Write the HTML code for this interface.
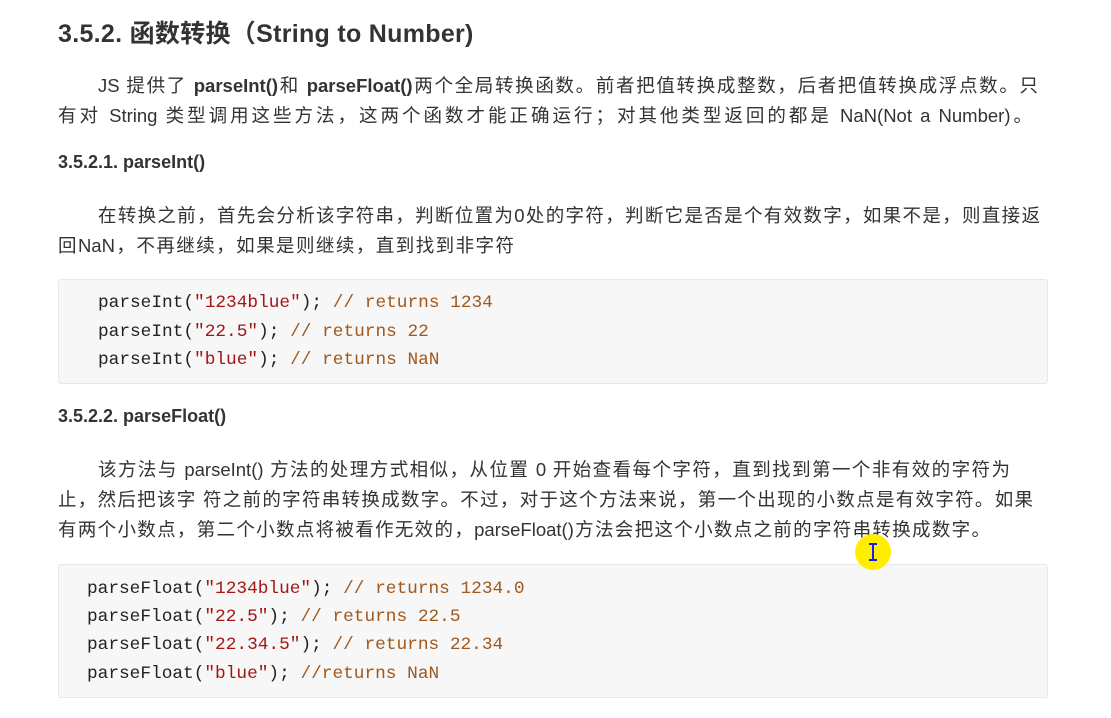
<!DOCTYPE html>
<html><head><meta charset="utf-8"><style>
body{margin:0;width:1111px;height:718px;background:#fff;position:relative;overflow:hidden;font-family:"Liberation Sans","Noto Sans CJK SC",sans-serif;color:#333}
.a{position:absolute;white-space:nowrap}
h1{position:absolute;left:58px;top:14px;margin:0;font-size:25px;letter-spacing:0.3px;font-weight:bold;color:#333}
h3{position:absolute;left:58px;margin:0;font-size:18px;font-weight:bold;color:#333}
.p{position:absolute;left:58px;font-size:18.5px;white-space:nowrap;color:#333;text-align:justify;text-align-last:justify;text-justify:inter-character}
.code{position:absolute;left:58px;width:988px;background:#f7f7f7;border:1px solid #e8e8e8;border-radius:3px}
.c{position:absolute;font-family:"Liberation Mono",monospace;font-size:17.8px;white-space:pre;color:#222}
.s{color:#a31515}.m{color:#a0581c}
</style></head><body>
<h1>3.5.2. 函数转换（String to Number)</h1>
<div class="p" style="top:72px;left:98px;width:940px">JS 提供了 <b>parseInt()</b>和 <b>parseFloat()</b>两个全局转换函数。前者把值转换成整数，后者把值转换成浮点数。只</div>
<div class="p" style="top:102px;width:974px">有对 String 类型调用这些方法，这两个函数才能正确运行；对其他类型返回的都是 NaN(Not a Number)。</div>
<h3 style="top:152px">3.5.2.1. parseInt()</h3>
<div class="p" style="top:202px;left:98px;width:942px">在转换之前，首先会分析该字符串，判断位置为0处的字符，判断它是否是个有效数字，如果不是，则直接返</div>
<div class="p" style="top:232px;width:456px">回NaN，不再继续，如果是则继续，直到找到非字符</div>
<div class="code" style="top:279px;height:103px"></div>
<div class="c" style="left:98px;top:293px">parseInt(<span class="s">"1234blue"</span>); <span class="m">// returns 1234</span></div>
<div class="c" style="left:98px;top:322px">parseInt(<span class="s">"22.5"</span>); <span class="m">// returns 22</span></div>
<div class="c" style="left:98px;top:350px">parseInt(<span class="s">"blue"</span>); <span class="m">// returns NaN</span></div>
<h3 style="top:406px">3.5.2.2. parseFloat()</h3>
<div class="p" style="top:456px;left:98px;width:912px">该方法与 parseInt() 方法的处理方式相似，从位置 0 开始查看每个字符，直到找到第一个非有效的字符为</div>
<div class="p" style="top:486px;width:975px">止，然后把该字 符之前的字符串转换成数字。不过，对于这个方法来说，第一个出现的小数点是有效字符。如果</div>
<div class="p" style="top:516px;width:932px">有两个小数点，第二个小数点将被看作无效的，parseFloat()方法会把这个小数点之前的字符串转换成数字。</div>
<div class="code" style="top:564px;height:132px"></div>
<div class="c" style="left:87px;top:579px">parseFloat(<span class="s">"1234blue"</span>); <span class="m">// returns 1234.0</span></div>
<div class="c" style="left:87px;top:607px">parseFloat(<span class="s">"22.5"</span>); <span class="m">// returns 22.5</span></div>
<div class="c" style="left:87px;top:635px">parseFloat(<span class="s">"22.34.5"</span>); <span class="m">// returns 22.34</span></div>
<div class="c" style="left:87px;top:664px">parseFloat(<span class="s">"blue"</span>); <span class="m">//returns NaN</span></div>
<div style="position:absolute;left:855px;top:534px;width:36px;height:36px;border-radius:50%;background:#ffee00"></div>
<svg class="a" style="left:866px;top:542px" width="14" height="20"><path d="M3 2H11M7 2V18M3 18H11" stroke="#1a1aff" stroke-width="2" fill="none"/></svg>
</body></html>
